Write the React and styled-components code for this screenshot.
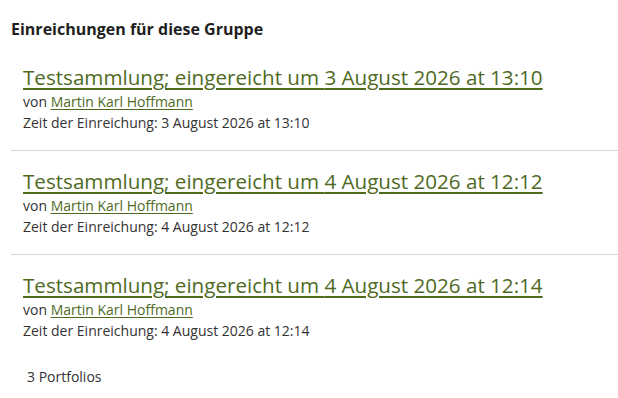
import React from 'react';
import styled, { createGlobalStyle } from 'styled-components';

const GlobalStyle = createGlobalStyle`
  body {
    margin: 0;
    background: #fff;
    font-family: "Open Sans", "DejaVu Sans", sans-serif;
    color: #333;
  }
`;

const Page = styled.div`
  padding: 17px 0 0 11px;
`;

const Heading = styled.h3`
  font-size: 16px;
  font-weight: 700;
  color: #1f1f1f;
  margin: 0 0 6px 0;
  line-height: 24px;
`;

const List = styled.div`
  display: flex;
  flex-direction: column;
`;

const Item = styled.div`
  padding: 17px 12px 17px 12px;
  border-bottom: ${(p) => (p.$last ? 'none' : '1px solid #d6d6d9')};
`;

const Title = styled.a`
  display: block;
  font-size: 20.6px;
  line-height: 26px;
  color: #4f6a1f;
  text-decoration: underline;
  text-underline-offset: 3px;
  margin-bottom: 1px;
`;

const Meta = styled.div`
  font-size: 14px;
  line-height: 21px;
  color: #333;
`;

const Author = styled.a`
  color: #4f6a1f;
  text-decoration: underline;
  text-underline-offset: 2px;
`;

const Count = styled.div`
  font-size: 14px;
  line-height: 21px;
  padding: 8px 16px;
  color: #333;
`;

const items = [
  { date: '3 August 2026 at 13:10' },
  { date: '4 August 2026 at 12:12' },
  { date: '4 August 2026 at 12:14' },
];

export default function App() {
  return (
    <>
      <GlobalStyle />
      <Page>
        <Heading>Einreichungen für diese Gruppe</Heading>
        <List>
          {items.map((it, i) => (
            <Item key={i} $last={i === items.length - 1}>
              <Title href="#">Testsammlung; eingereicht um {it.date}</Title>
              <Meta>
                von <Author href="#">Martin Karl Hoffmann</Author>
              </Meta>
              <Meta>Zeit der Einreichung: {it.date}</Meta>
            </Item>
          ))}
        </List>
        <Count>3 Portfolios</Count>
      </Page>
    </>
  );
}
